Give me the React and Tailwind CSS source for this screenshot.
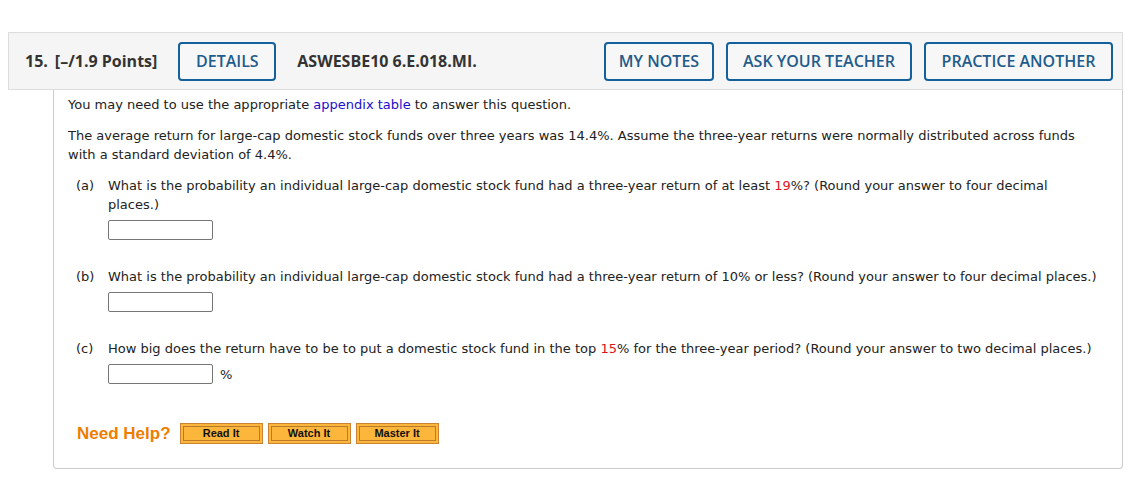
import React from "react";

const HeaderButton = ({ children, className = "" }) => (
  <button
    className={`h-[39px] rounded-[4px] border-2 border-[#14609a] bg-[#f7f7f7] text-[16px] font-semibold text-[#1f5c8c] ${className}`}
  >
    {children}
  </button>
);

const AnswerBox = () => (
  <input
    type="text"
    className="h-[20px] w-[105px] rounded-[2px] border border-[#767676] bg-white"
  />
);

const HelpButton = ({ children, className = "" }) => (
  <button
    className={`h-[21px] border border-[#c98332] bg-[#fdb63c] p-[2px] ${className}`}
  >
    <span className="flex h-full w-full items-center justify-center border border-[#b97a2c] text-[11px] font-bold text-[#111]">
      {children}
    </span>
  </button>
);

const Question = ({ label, children, suffix }) => (
  <div className="flex">
    <div className="w-[40px] shrink-0 pl-[8px]">{label}</div>
    <div className="flex-1">
      <p>{children}</p>
      <div className="mt-[6px] flex items-center gap-[7px]">
        <AnswerBox />
        {suffix && <span>{suffix}</span>}
      </div>
    </div>
  </div>
);

export default function App() {
  return (
    <div className="min-h-[489px] bg-white pt-[32px] pl-[8px] pr-[15px]">
      {/* HEADER */}
      <div
        className="flex h-[58px] items-center border border-[#dddddd] bg-[#f5f5f5] pl-[16px] pr-[9px] text-[#333]"
        style={{ fontFamily: "'Open Sans', sans-serif" }}
      >
        <span className="text-[16px] font-bold">15.</span>
        <span className="ml-[7px] text-[16px] font-bold">[–/1.9 Points]</span>
        <HeaderButton className="ml-[21px] w-[98px]">DETAILS</HeaderButton>
        <span className="ml-[21px] text-[16px] font-bold">ASWESBE10 6.E.018.MI.</span>
        <div className="ml-auto flex gap-[12px]">
          <HeaderButton className="w-[110px]">MY NOTES</HeaderButton>
          <HeaderButton className="w-[186px]">ASK YOUR TEACHER</HeaderButton>
          <HeaderButton className="w-[189px]">PRACTICE ANOTHER</HeaderButton>
        </div>
      </div>

      {/* BODY */}
      <div
        className="ml-[45px] h-[379px] rounded-b-[4px] border-x border-b border-[#cccccc] pl-[14px] pr-[23px] pt-[5px] text-[13px] leading-[19px] text-[#222]"
        style={{ fontFamily: "Verdana, 'DejaVu Sans', sans-serif" }}
      >
        <p>
          You may need to use the appropriate{" "}
          <span className="text-[#1a0dcc]">appendix table</span> to answer this
          question.
        </p>
        <p className="mt-[12px]">
          The average return for large-cap domestic stock funds over three years
          was 14.4%. Assume the three-year returns were normally distributed
          across funds with a standard deviation of 4.4%.
        </p>

        <div className="mt-[12px] flex flex-col gap-[27px]">
          <Question label="(a)">
            What is the probability an individual large-cap domestic stock fund
            had a three-year return of at least{" "}
            <span className="text-[#e0121b]">19</span>%? (Round your answer to
            four decimal places.)
          </Question>
          <Question label="(b)">
            What is the probability an individual large-cap domestic stock fund
            had a three-year return of 10% or less? (Round your answer to four
            decimal places.)
          </Question>
          <Question label="(c)" suffix="%">
            How big does the return have to be to put a domestic stock fund in
            the top <span className="text-[#e0121b]">15</span>% for the
            three-year period? (Round your answer to two decimal places.)
          </Question>
        </div>

        <div
          className="mt-[39px] flex items-center pl-[9px]"
          style={{ fontFamily: "'Liberation Sans', Arial, sans-serif" }}
        >
          <span className="text-[17px] font-bold text-[#ee7d00]">Need Help?</span>
          <div className="ml-[9px] flex gap-[5px]">
            <HelpButton className="w-[83px]">Read It</HelpButton>
            <HelpButton className="w-[83px]">Watch It</HelpButton>
            <HelpButton className="w-[83px]">Master It</HelpButton>
          </div>
        </div>
      </div>
    </div>
  );
}
